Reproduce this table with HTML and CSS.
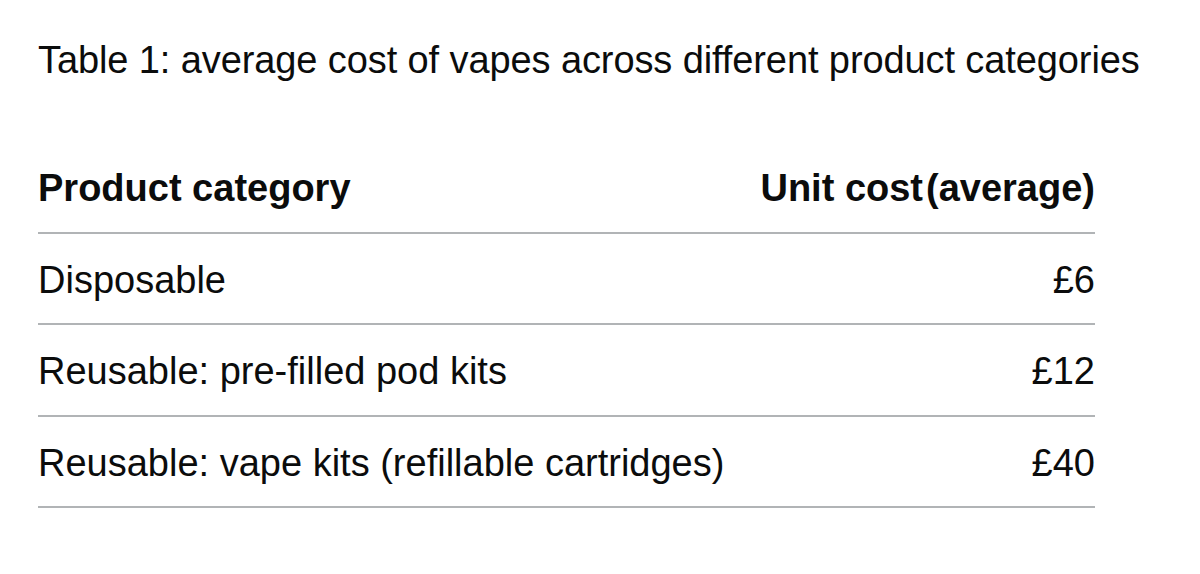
FILE: index.html
```html
<!DOCTYPE html>
<html lang="en">
<head>
<meta charset="utf-8">
<title>Table 1</title>
<link rel="stylesheet" href="styles.css">
</head>
<body>
<div class="page">
  <div class="cost-caption" id="cost-caption">Table 1: average cost of vapes across different product categories</div>
  <table class="cost-table" aria-labelledby="cost-caption">
    <thead>
      <tr>
        <th class="cell cell-head">Product category</th>
        <th class="cell cell-head cell-num">Unit cost<span class="avg">(average)</span></th>
      </tr>
    </thead>
    <tbody>
      <tr>
        <td class="cell">Disposable</td>
        <td class="cell cell-num">£6</td>
      </tr>
      <tr>
        <td class="cell">Reusable: pre-filled pod kits</td>
        <td class="cell cell-num">£12</td>
      </tr>
      <tr>
        <td class="cell">Reusable: vape kits (refillable cartridges)</td>
        <td class="cell cell-num">£40</td>
      </tr>
    </tbody>
  </table>
</div>
</body>
</html>
```

FILE: styles.css
```css
html, body {
  margin: 0;
  padding: 0;
  background: #ffffff;
}

body {
  font-family: "Liberation Sans", Arial, Helvetica, sans-serif;
  color: #0b0c0c;
}

.page {
  padding: 37px 0 0 38px;
  width: 1057px;
}

.cost-caption {
  font-size: 38px;
  line-height: 46px;
  font-weight: 400;
  letter-spacing: -0.1px;
  white-space: nowrap;
  margin-bottom: 59px;
}

.cost-table {
  width: 100%;
  border-collapse: collapse;
  border-spacing: 0;
}

.cell {
  font-size: 38px;
  line-height: 45.5px;
  padding: 24px 0 20px;
  border-bottom: 2px solid #b1b4b6;
  text-align: left;
  font-weight: 400;
  white-space: nowrap;
}

.cell-head {
  font-weight: 700;
}

.cell-num {
  text-align: right;
}

.avg {
  margin-left: 3px;
}
```
